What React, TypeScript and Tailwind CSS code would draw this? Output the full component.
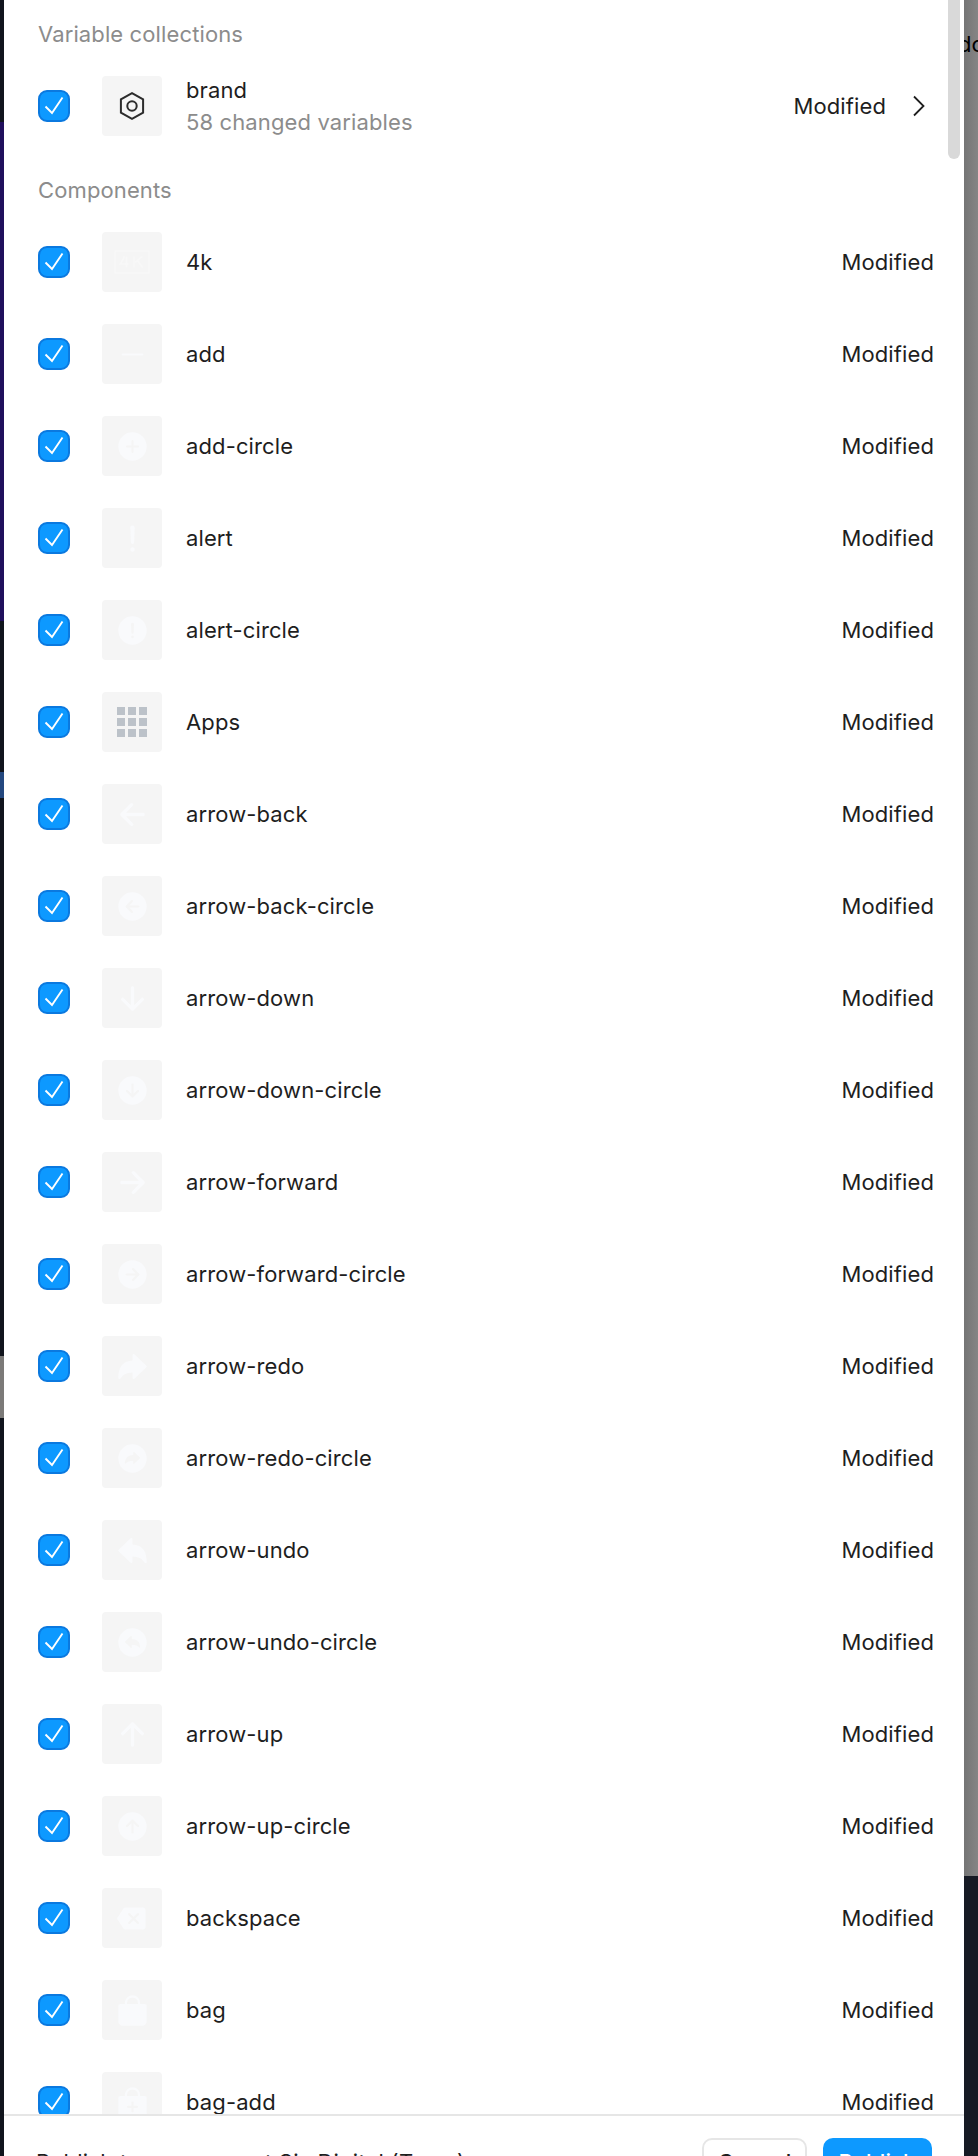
import type { IconType } from "react-icons";
import {
  IoAddCircle,
  IoAlert,
  IoAlertCircle,
  IoArrowBack,
  IoArrowBackCircle,
  IoArrowDown,
  IoArrowDownCircle,
  IoArrowForward,
  IoArrowForwardCircle,
  IoArrowRedo,
  IoArrowRedoCircle,
  IoArrowUndo,
  IoArrowUndoCircle,
  IoArrowUp,
  IoArrowUpCircle,
  IoBackspace,
  IoBag,
  IoBagAdd,
  IoRemove,
} from "react-icons/io5";

interface ComponentItem {
  name: string;
  icon: IconType | (() => React.ReactNode);
}

function FourK() {
  return (
    <svg width="36" height="24" viewBox="0 0 36 24" fill="none" stroke="#f8f8f8" strokeWidth="1.6">
      <rect x="1" y="1" width="34" height="22" rx="1" />
      <path d="M10.5 6.5 6.5 14h8M12.5 6.5v11M20 6.5v11M28 6.5l-7 6M23.5 10.5l5 7" />
    </svg>
  );
}

function AppsGrid() {
  return (
    <div className="grid grid-cols-3 gap-[3px]">
      {Array.from({ length: 9 }, (_, i) => (
        <span key={i} className="size-2 bg-[#bcc2c9]" />
      ))}
    </div>
  );
}

const items: ComponentItem[] = [
  { name: "4k", icon: FourK },
  { name: "add", icon: IoRemove },
  { name: "add-circle", icon: IoAddCircle },
  { name: "alert", icon: IoAlert },
  { name: "alert-circle", icon: IoAlertCircle },
  { name: "Apps", icon: AppsGrid },
  { name: "arrow-back", icon: IoArrowBack },
  { name: "arrow-back-circle", icon: IoArrowBackCircle },
  { name: "arrow-down", icon: IoArrowDown },
  { name: "arrow-down-circle", icon: IoArrowDownCircle },
  { name: "arrow-forward", icon: IoArrowForward },
  { name: "arrow-forward-circle", icon: IoArrowForwardCircle },
  { name: "arrow-redo", icon: IoArrowRedo },
  { name: "arrow-redo-circle", icon: IoArrowRedoCircle },
  { name: "arrow-undo", icon: IoArrowUndo },
  { name: "arrow-undo-circle", icon: IoArrowUndoCircle },
  { name: "arrow-up", icon: IoArrowUp },
  { name: "arrow-up-circle", icon: IoArrowUpCircle },
  { name: "backspace", icon: IoBackspace },
  { name: "bag", icon: IoBag },
  { name: "bag-add", icon: IoBagAdd },
];

function Checkbox() {
  return (
    <span
      role="checkbox"
      aria-checked="true"
      className="flex size-8 shrink-0 items-center justify-center rounded-[9px] border-2 border-[#0b79df] bg-[#0d99ff]"
    >
      <svg width="28" height="28" viewBox="0 0 28 28" fill="none" stroke="white" strokeWidth="1.9">
        <path d="M5.5 14.5 12 21 22.5 5.5" />
      </svg>
    </span>
  );
}

function Thumb({ children }: { children: React.ReactNode }) {
  return (
    <div className="ml-8 mr-6 flex size-15 shrink-0 items-center justify-center rounded bg-[#f5f5f5] text-[#f9fafc]">
      {children}
    </div>
  );
}

export default function App() {
  return (
    <div className="flex h-[2156px] w-[978px] overflow-hidden bg-white font-['Inter',sans-serif] text-[22px] leading-8 tracking-[0.12px] text-[#1e1e1e]">
      <div className="flex w-1 shrink-0 flex-col bg-[#11151d]">
        <div className="h-[122px]" />
        <div className="h-[499px] bg-[#200f5c]" />
        <div className="h-[151px]" />
        <div className="h-[26px] bg-[#24487f]" />
        <div className="h-[558px]" />
        <div className="h-[62px] bg-[#7b7a78]" />
      </div>

      <div className="relative flex w-[960px] shrink-0 flex-col">
        <div className="h-[2114px] overflow-hidden pl-[34px] pr-[30px]">
          <h2 className="flex h-[60px] items-center pt-2 text-[#8c8c8c]">Variable collections</h2>
          <div className="flex h-[92px] items-center">
            <Checkbox />
            <Thumb>
              <svg
                width="28"
                height="30"
                viewBox="0 0 28 30"
                fill="none"
                stroke="#2c2c2c"
                strokeWidth="2"
              >
                <path d="M14 2.2 25.1 8.3v13.4L14 27.8 2.9 21.7V8.3z" />
                <circle cx="14" cy="15" r="4.7" />
              </svg>
            </Thumb>
            <div className="flex-1">
              <p>brand</p>
              <p className="text-[#8c8c8c]">58 changed variables</p>
            </div>
            <span>Modified</span>
            <svg
              className="ml-[25px] mr-[7px]"
              width="16"
              height="24"
              viewBox="0 0 16 24"
              fill="none"
              stroke="#1e1e1e"
              strokeWidth="1.8"
            >
              <path d="M3 2.5 12.5 12 3 21.5" />
            </svg>
          </div>

          <h2 className="flex h-16 items-center pt-3 text-[#8c8c8c]">Components</h2>
          {items.map(({ name, icon: Icon }) => (
            <div key={name} className="flex h-[92px] items-center">
              <Checkbox />
              <Thumb>
                <Icon size={35} />
              </Thumb>
              <span className="flex-1">{name}</span>
              <span>Modified</span>
            </div>
          ))}
        </div>

        <div className="flex h-[42px] items-start overflow-hidden border-t-2 border-[#e6e6e6] pl-8 pr-8 pt-[22px]">
          <p className="flex-1 pt-2 tracking-[0.25px]">Publish to everyone at Six Digital (Team)</p>
          <button className="mr-4 h-12 w-[105px] shrink-0 rounded-[10px] border-2 border-[#e6e6e6] font-medium">
            Cancel
          </button>
          <button className="h-12 w-[109px] shrink-0 rounded-[10px] bg-[#0d99ff] font-medium text-white">
            Publish
          </button>
        </div>

        {/* scrollbar thumb */}
        <div className="absolute right-1 top-0 h-[159px] w-3 rounded-b-full bg-[#d9d9d9]" />
      </div>

      <div className="w-3.5 shrink-0 overflow-hidden bg-[#161a24]">
        <div className="h-[1876px] bg-linear-to-r from-[#757575] to-[#858585] pt-7 text-black">
          <span className="-ml-1.5">do</span>
        </div>
      </div>
    </div>
  );
}
